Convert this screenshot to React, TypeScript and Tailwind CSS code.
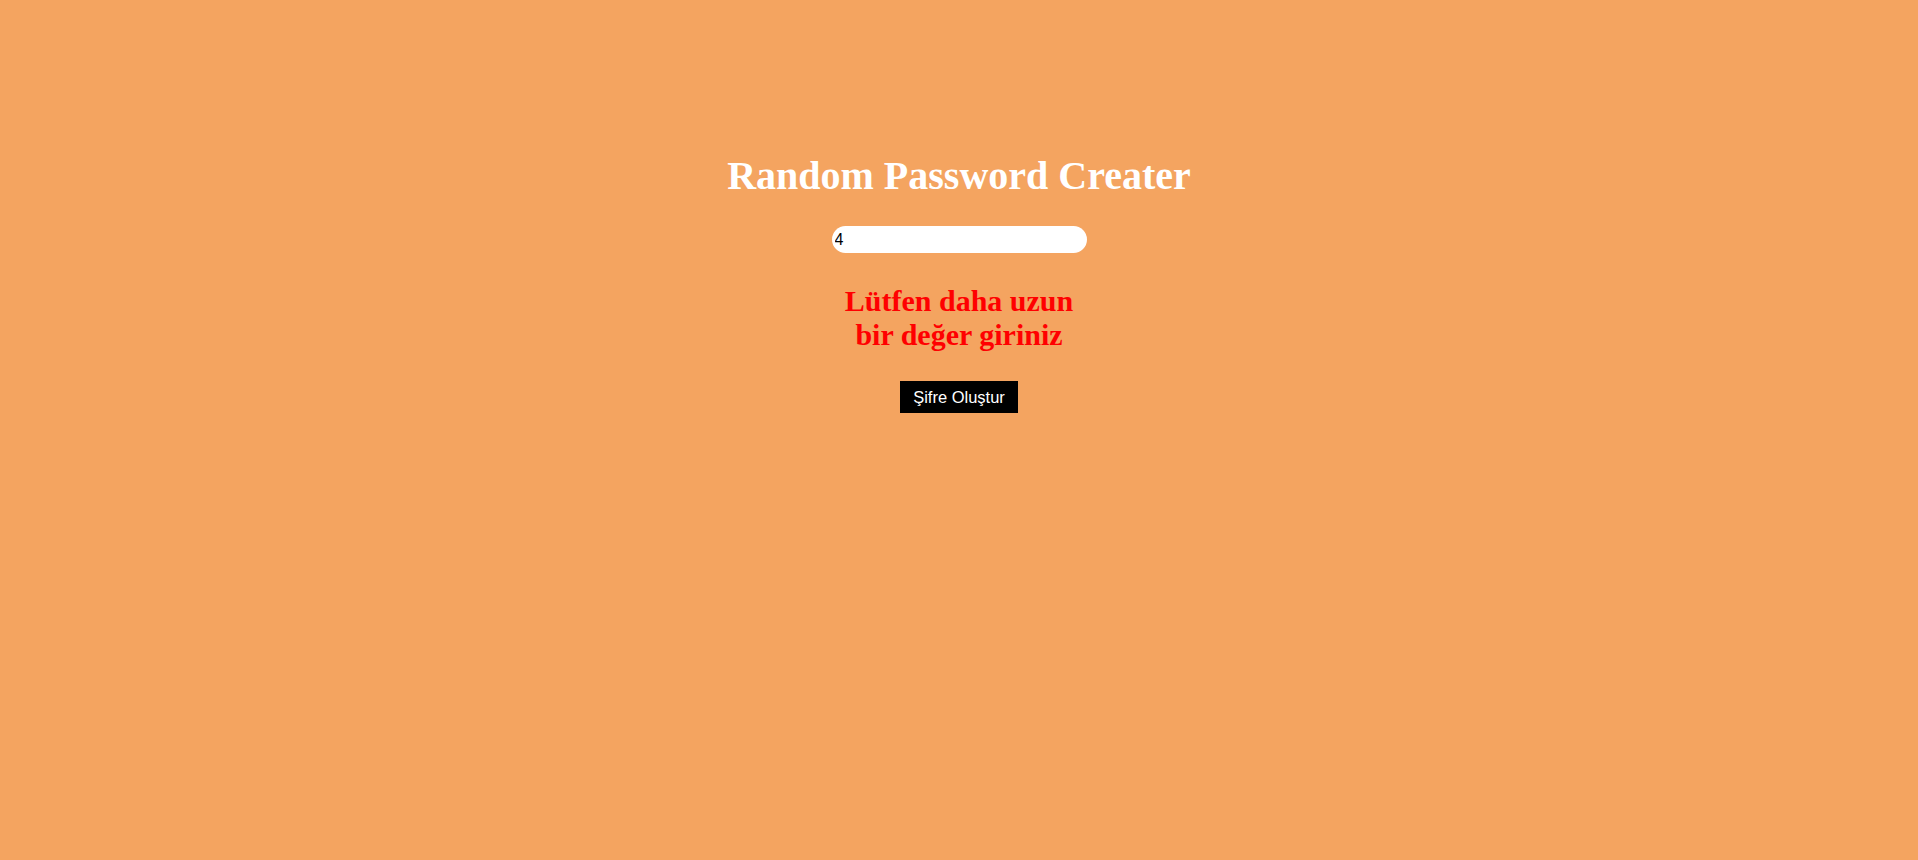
import { useState } from 'react';

/** Generates a random password of the given length. */
function createPassword(length: number): string {
  const chars = 'ABCDEFGHIJKLMNOPQRSTUVWXYZabcdefghijklmnopqrstuvwxyz0123456789!@#$%&*';
  let result = '';
  for (let i = 0; i < length; i++) {
    result += chars[Math.floor(Math.random() * chars.length)];
  }
  return result;
}

export default function App() {
  const [length, setLength] = useState('4');
  const [password, setPassword] = useState('');
  const tooShort = Number(length) < 8;

  const handleCreate = () => {
    if (tooShort) return;
    setPassword(createPassword(Number(length)));
  };

  return (
    <div className="min-h-screen w-full bg-[#f4a460] flex flex-col items-center pt-[153px]">
      {/* Title */}
      <h1 className="font-['Liberation_Serif','Times_New_Roman',serif] font-bold text-[40px] leading-[46px] text-white">
        Random Password Creater
      </h1>

      {/* Length input */}
      <input
        type="text"
        value={length}
        onChange={(e) => setLength(e.target.value)}
        className="mt-[27px] w-[255px] h-[27px] px-[3px] bg-white rounded-full border-0 outline-none text-black text-[16px] font-['Liberation_Sans',Arial,sans-serif]"
      />

      {/* Warning */}
      {tooShort ? (
        <p className="mt-[31px] w-[260px] text-center font-['Liberation_Serif','Times_New_Roman',serif] font-bold text-[30px] leading-[34px] text-[#ff0000]">
          Lütfen daha uzun bir değer giriniz
        </p>
      ) : (
        <p className="mt-[31px] w-[260px] text-center font-['Liberation_Sans',Arial,sans-serif] text-[18px] text-white break-all">
          {password}
        </p>
      )}

      {/* Submit */}
      <button
        onClick={handleCreate}
        className="mt-[29px] bg-black text-white px-[13px] py-[7px] text-[16.5px] leading-[18px] font-['Liberation_Sans',Arial,sans-serif] cursor-pointer"
      >
        Şifre Oluştur
      </button>
    </div>
  );
}
